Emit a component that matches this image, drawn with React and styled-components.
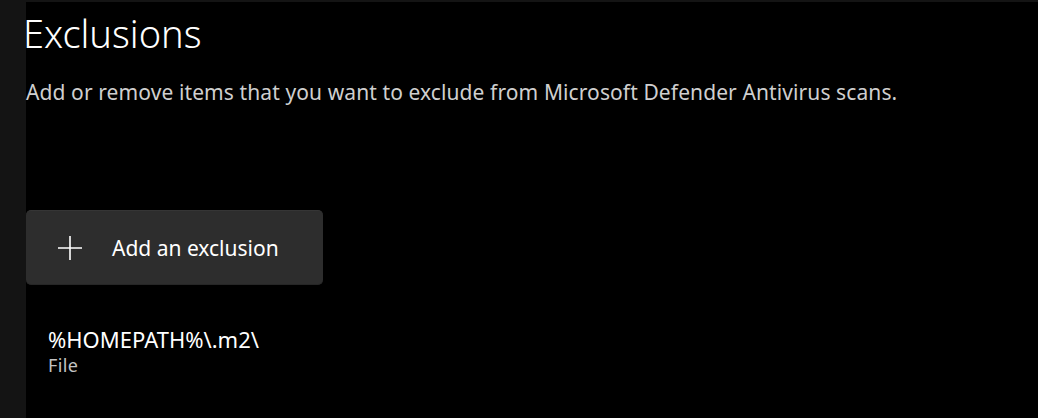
import React from "react";
import styled, { createGlobalStyle } from "styled-components";

const Global = createGlobalStyle`
  html, body { margin: 0; padding: 0; background: #141414; }
  body { font-family: "Noto Sans", "Open Sans", sans-serif; -webkit-font-smoothing: antialiased; }
  #root { width: 1038px; height: 418px; overflow: hidden; }
`;

const Shell = styled.div`
  display: flex;
  width: 1038px;
  height: 418px;
  background: #141414;
`;

const Rail = styled.div`
  width: 26px;
  flex: none;
  background: #141414;
`;

const Main = styled.main`
  flex: 1;
  margin-top: 2px;
  background: #000;
  display: flex;
  flex-direction: column;
  color: #fff;
`;

const Title = styled.h1`
  margin: 7px 0 0 -3px;
  font-size: 38px;
  font-weight: 300;
  line-height: 48px;
  color: #fff;
  letter-spacing: 0;
`;

const Subtitle = styled.p`
  margin: 21px 0 0 0;
  font-size: 21px;
  line-height: 28px;
  letter-spacing: 0.1px;
  color: #cfcfcf;
  font-weight: 400;
`;

const AddButton = styled.button`
  margin-top: 104px;
  width: 297px;
  height: 75px;
  display: flex;
  align-items: center;
  gap: 30px;
  padding: 0 0 0 32px;
  box-sizing: border-box;
  background: #2d2d2d;
  border: none;
  border-top: 1px solid #353535;
  border-bottom: 1px solid #262626;
  border-radius: 5px;
  color: #fff;
  font-family: inherit;
  font-size: 21px;
  cursor: pointer;
`;

const PlusIcon = styled.svg`
  width: 24px;
  height: 24px;
  flex: none;
`;

const Item = styled.div`
  margin-top: 40px;
  padding-left: 22px;
  display: flex;
  flex-direction: column;
`;

const ItemName = styled.div`
  font-size: 22px;
  line-height: 28px;
  color: #fff;
`;

const ItemType = styled.div`
  font-size: 18px;
  line-height: 24px;
  letter-spacing: 0.4px;
  color: #c3c3c3;
`;

export default function App() {
  return (
    <>
      <Global />
      <Shell>
        <Rail />
        <Main>
          <Title>Exclusions</Title>
          <Subtitle>
            Add or remove items that you want to exclude from Microsoft Defender Antivirus scans.
          </Subtitle>
          <AddButton>
            <PlusIcon viewBox="0 0 24 24" fill="none" stroke="#fff" strokeWidth="1.6">
              <path d="M12 0v24M0 12h24" />
            </PlusIcon>
            <span>Add an exclusion</span>
          </AddButton>
          <Item>
            <ItemName>%HOMEPATH%\.m2\</ItemName>
            <ItemType>File</ItemType>
          </Item>
        </Main>
      </Shell>
    </>
  );
}
